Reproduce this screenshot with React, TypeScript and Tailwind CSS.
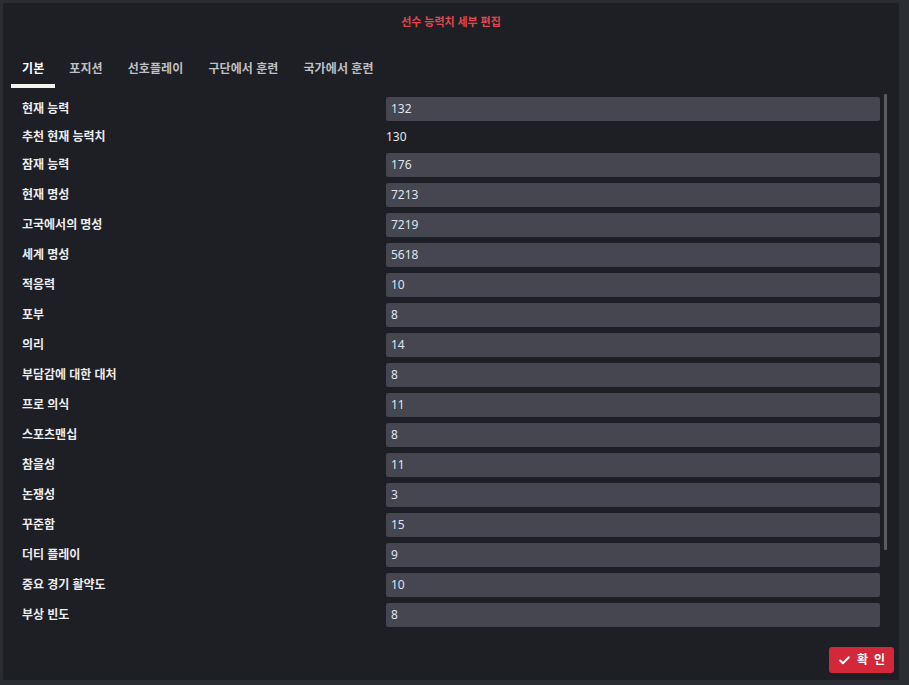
import React from 'react';
import { Check } from 'lucide-react';

type Row = { label: string; value: string; editable: boolean };

const rows: Row[] = [
  { label: '현재 능력', value: '132', editable: true },
  { label: '추천 현재 능력치', value: '130', editable: false },
  { label: '잠재 능력', value: '176', editable: true },
  { label: '현재 명성', value: '7213', editable: true },
  { label: '고국에서의 명성', value: '7219', editable: true },
  { label: '세계 명성', value: '5618', editable: true },
  { label: '적응력', value: '10', editable: true },
  { label: '포부', value: '8', editable: true },
  { label: '의리', value: '14', editable: true },
  { label: '부담감에 대한 대처', value: '8', editable: true },
  { label: '프로 의식', value: '11', editable: true },
  { label: '스포츠맨십', value: '8', editable: true },
  { label: '참을성', value: '11', editable: true },
  { label: '논쟁성', value: '3', editable: true },
  { label: '꾸준함', value: '15', editable: true },
  { label: '더티 플레이', value: '9', editable: true },
  { label: '중요 경기 활약도', value: '10', editable: true },
  { label: '부상 빈도', value: '8', editable: true },
];

const tabs = ['기본', '포지션', '선호플레이', '구단에서 훈련', '국가에서 훈련'];

const font = 'font-["Noto_Sans","Noto_Sans_CJK_KR",sans-serif]';

const StatRow = ({ row }: { row: Row }) => (
  <div className={`flex items-center ${row.editable ? 'h-[24px]' : 'h-[20px]'}`}>
    <div className="w-[364px] shrink-0 text-[12px] font-bold text-[#ececef] leading-4">{row.label}</div>
    {row.editable ? (
      <div className="flex-1 h-[24px] bg-[#45464f] rounded-[2px] flex items-center pl-[5px] text-[12px] text-[#dfe4ef]">
        {row.value}
      </div>
    ) : (
      <div className="flex-1 text-[12px] text-[#e4e7ee]">{row.value}</div>
    )}
  </div>
);

export default function App() {
  const [active] = React.useState(0);

  return (
    <div className={`w-[909px] h-[685px] bg-[#2a2d31] p-[2px] ${font}`}>
      <div className="w-[898px] h-[679px] bg-[#1e1f24] rounded-[3px] border border-[#2b2d32] flex flex-col">
        <div className="h-[38px] flex items-center justify-center text-[11px] font-semibold text-[#e0474f]">
          선수 능력치 세부 편집
        </div>

        <div className="flex gap-[3px] pl-[8px] mt-[10px]">
          {tabs.map((t, i) => (
            <div
              key={t}
              className={`px-[11px] pt-[10px] pb-[7px] text-[12px] font-semibold leading-4 tracking-[0.1px] border-b-[4px] ${
                i === active ? 'text-white border-[#f4f4ef]' : 'text-[#bfc0c4] border-transparent'
              }`}
            >
              {t}
            </div>
          ))}
        </div>

        <div className="flex mt-[6px] pl-[19px] pr-[12px] h-[540px] overflow-hidden">
          <div className="flex-1 flex flex-col gap-[6px] pt-[3px]">
            {rows.map(r => (
              <StatRow key={r.label} row={r} />
            ))}
          </div>
          <div className="w-[3px] ml-[4px] shrink-0">
            <div className="h-[456px] bg-[#5a5b60] rounded-[1px]" />
          </div>
        </div>

        <div className="flex-1 flex items-end justify-end pr-[5px] pb-[7px]">
          <button className="h-[26px] w-[65px] bg-[#d3283a] rounded-[3px] flex items-center justify-center gap-[6px] text-white text-[12px] font-bold">
            <Check className="w-[13px] h-[13px]" strokeWidth={3.5} />
            <span className="tracking-[6px] mr-[-6px]">확인</span>
          </button>
        </div>
      </div>
    </div>
  );
}
